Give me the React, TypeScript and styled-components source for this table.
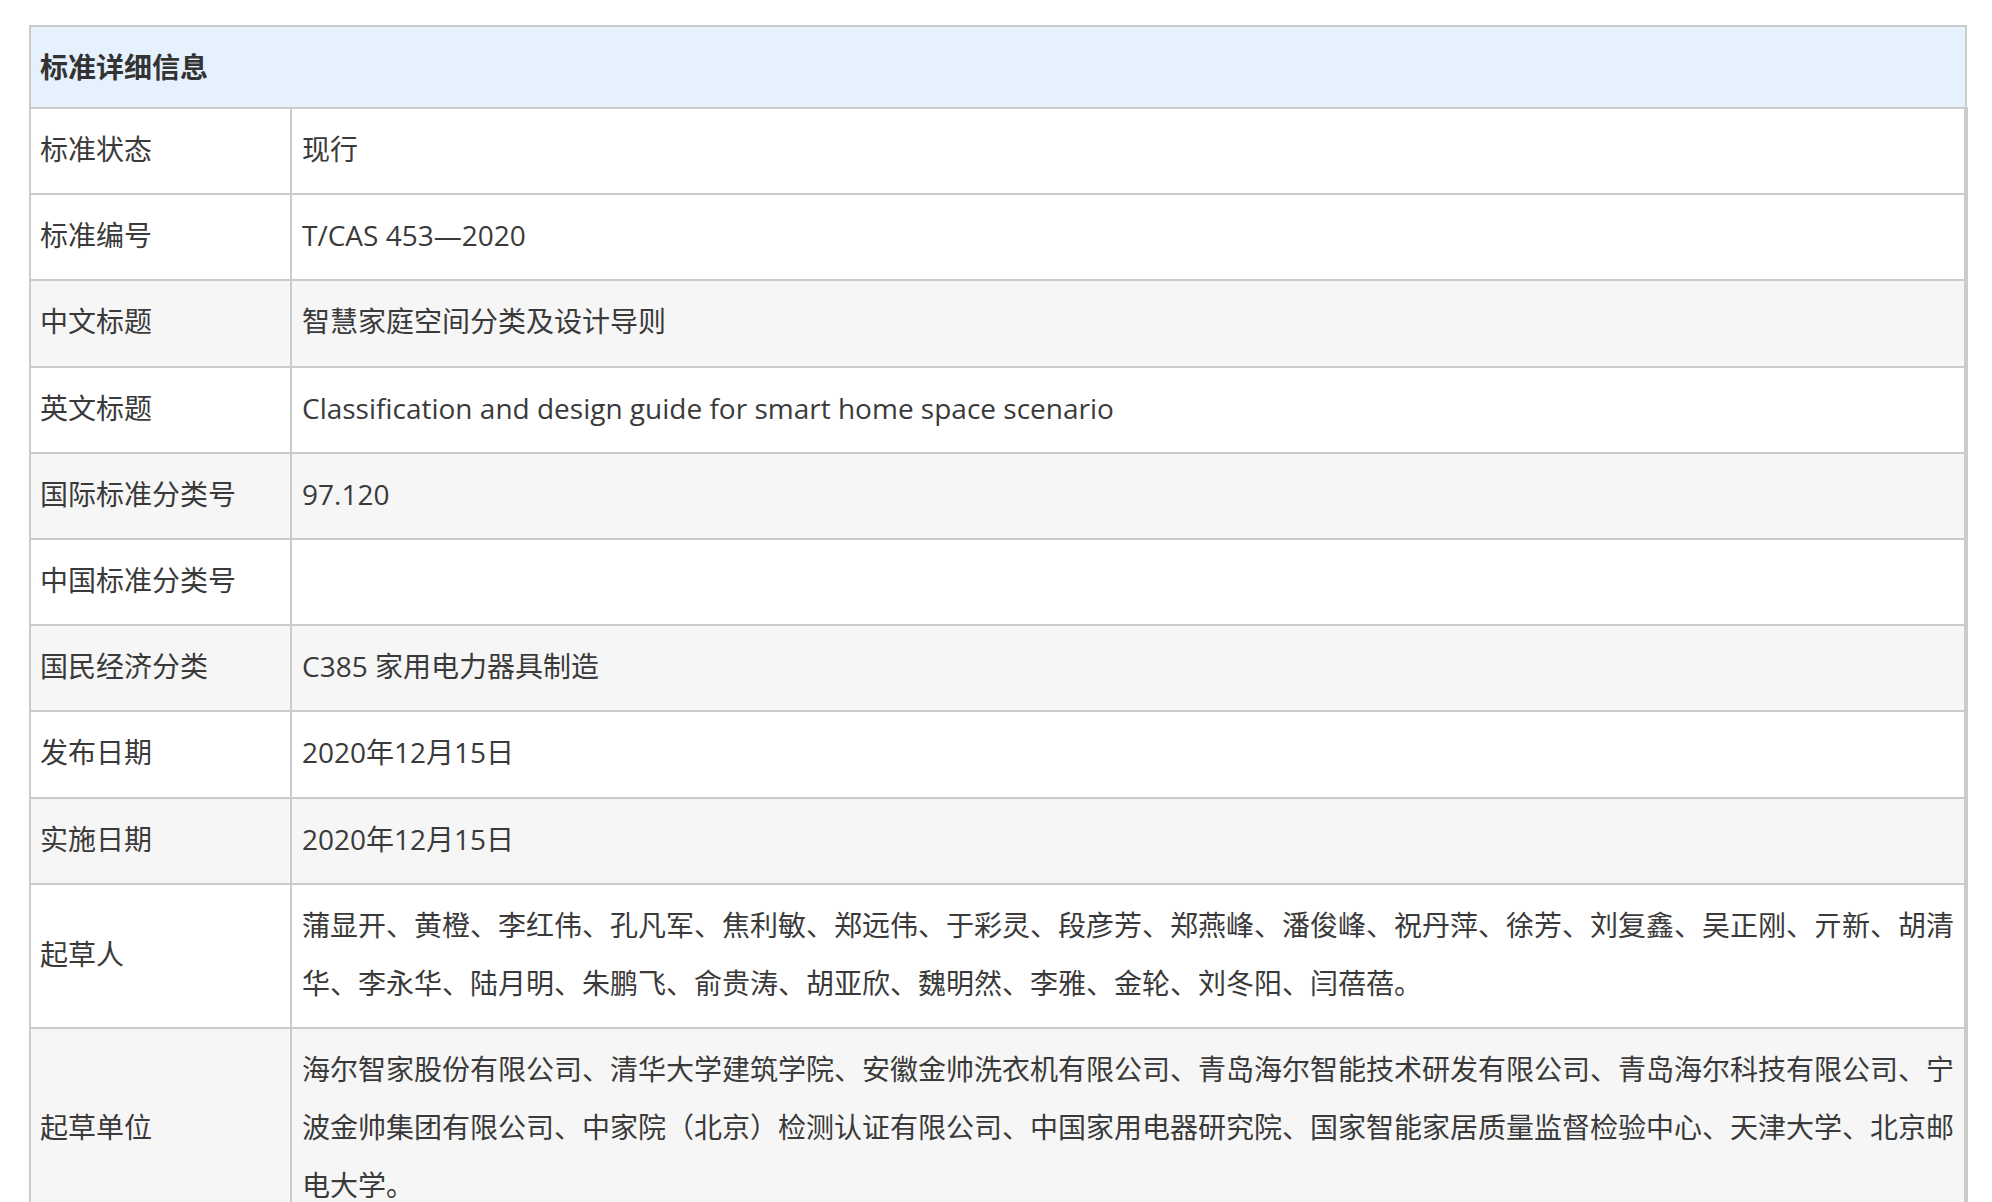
import React from 'react';
import styled, { createGlobalStyle } from 'styled-components';

const GlobalStyle = createGlobalStyle`
  * {
    box-sizing: border-box;
  }
  html,
  body {
    margin: 0;
    padding: 0;
    background: #fff;
    overflow: hidden;
  }
  body {
    font-family: 'Open Sans', 'Noto Sans CJK SC', sans-serif;
    color: #3a3a3a;
  }
`;

const Wrapper = styled.div`
  width: 1939px;
  margin: 25px 0 0 29px;
`;

const Title = styled.div`
  width: 1938px;
  height: 82px;
  padding-left: 9px;
  border: 2px solid #cbcbcb;
  border-bottom: none;
  background: #e5f1fd;
  font-size: 28px;
  font-weight: 700;
  line-height: 80px;
  color: #333;
`;

const Row = styled.div<{ $shade?: boolean }>`
  display: grid;
  grid-template-columns: 261px 1fr;
  border-top: 2px solid #cbcbcb;
  border-left: 2px solid #cbcbcb;
  border-right: 4px solid #cbcbcb;
  background: ${(p) => (p.$shade ? '#f6f6f6' : '#fff')};
  font-size: 28px;
  line-height: 58px;
`;

const Label = styled.div`
  display: flex;
  align-items: center;
  padding: 11px 0 15.2px 9px;
  border-right: 2px solid #cbcbcb;
  white-space: nowrap;
`;

const Value = styled.div`
  padding: 11px 4px 15.2px 10px;
  min-height: 84.2px;
  line-break: strict;
`;

type Item = { label: string; value: string };

const items: Item[] = [
  { label: '标准状态', value: '现行' },
  { label: '标准编号', value: 'T/CAS 453—2020' },
  { label: '中文标题', value: '智慧家庭空间分类及设计导则' },
  { label: '英文标题', value: 'Classification and design guide for smart home space scenario' },
  { label: '国际标准分类号', value: '97.120' },
  { label: '中国标准分类号', value: '' },
  { label: '国民经济分类', value: 'C385 家用电力器具制造' },
  { label: '发布日期', value: '2020年12月15日' },
  { label: '实施日期', value: '2020年12月15日' },
  {
    label: '起草人',
    value:
      '蒲显开、黄橙、李红伟、孔凡军、焦利敏、郑远伟、于彩灵、段彦芳、郑燕峰、潘俊峰、祝丹萍、徐芳、刘复鑫、吴正刚、亓新、胡清华、李永华、陆月明、朱鹏飞、俞贵涛、胡亚欣、魏明然、李雅、金轮、刘冬阳、闫蓓蓓。',
  },
  {
    label: '起草单位',
    value:
      '海尔智家股份有限公司、清华大学建筑学院、安徽金帅洗衣机有限公司、青岛海尔智能技术研发有限公司、青岛海尔科技有限公司、宁波金帅集团有限公司、中家院（北京）检测认证有限公司、中国家用电器研究院、国家智能家居质量监督检验中心、天津大学、北京邮电大学。',
  },
];

// rows 3,5,7,9,11 are shaded in the source page
const shaded = new Set([2, 4, 6, 8, 10]);

const App: React.FC = () => {
  return (
    <>
      <GlobalStyle />
      <Wrapper>
        <Title>标准详细信息</Title>
        {items.map((item, i) => (
          <Row key={item.label} $shade={shaded.has(i)}>
            <Label>{item.label}</Label>
            <Value>{item.value}</Value>
          </Row>
        ))}
      </Wrapper>
    </>
  );
};

export default App;
